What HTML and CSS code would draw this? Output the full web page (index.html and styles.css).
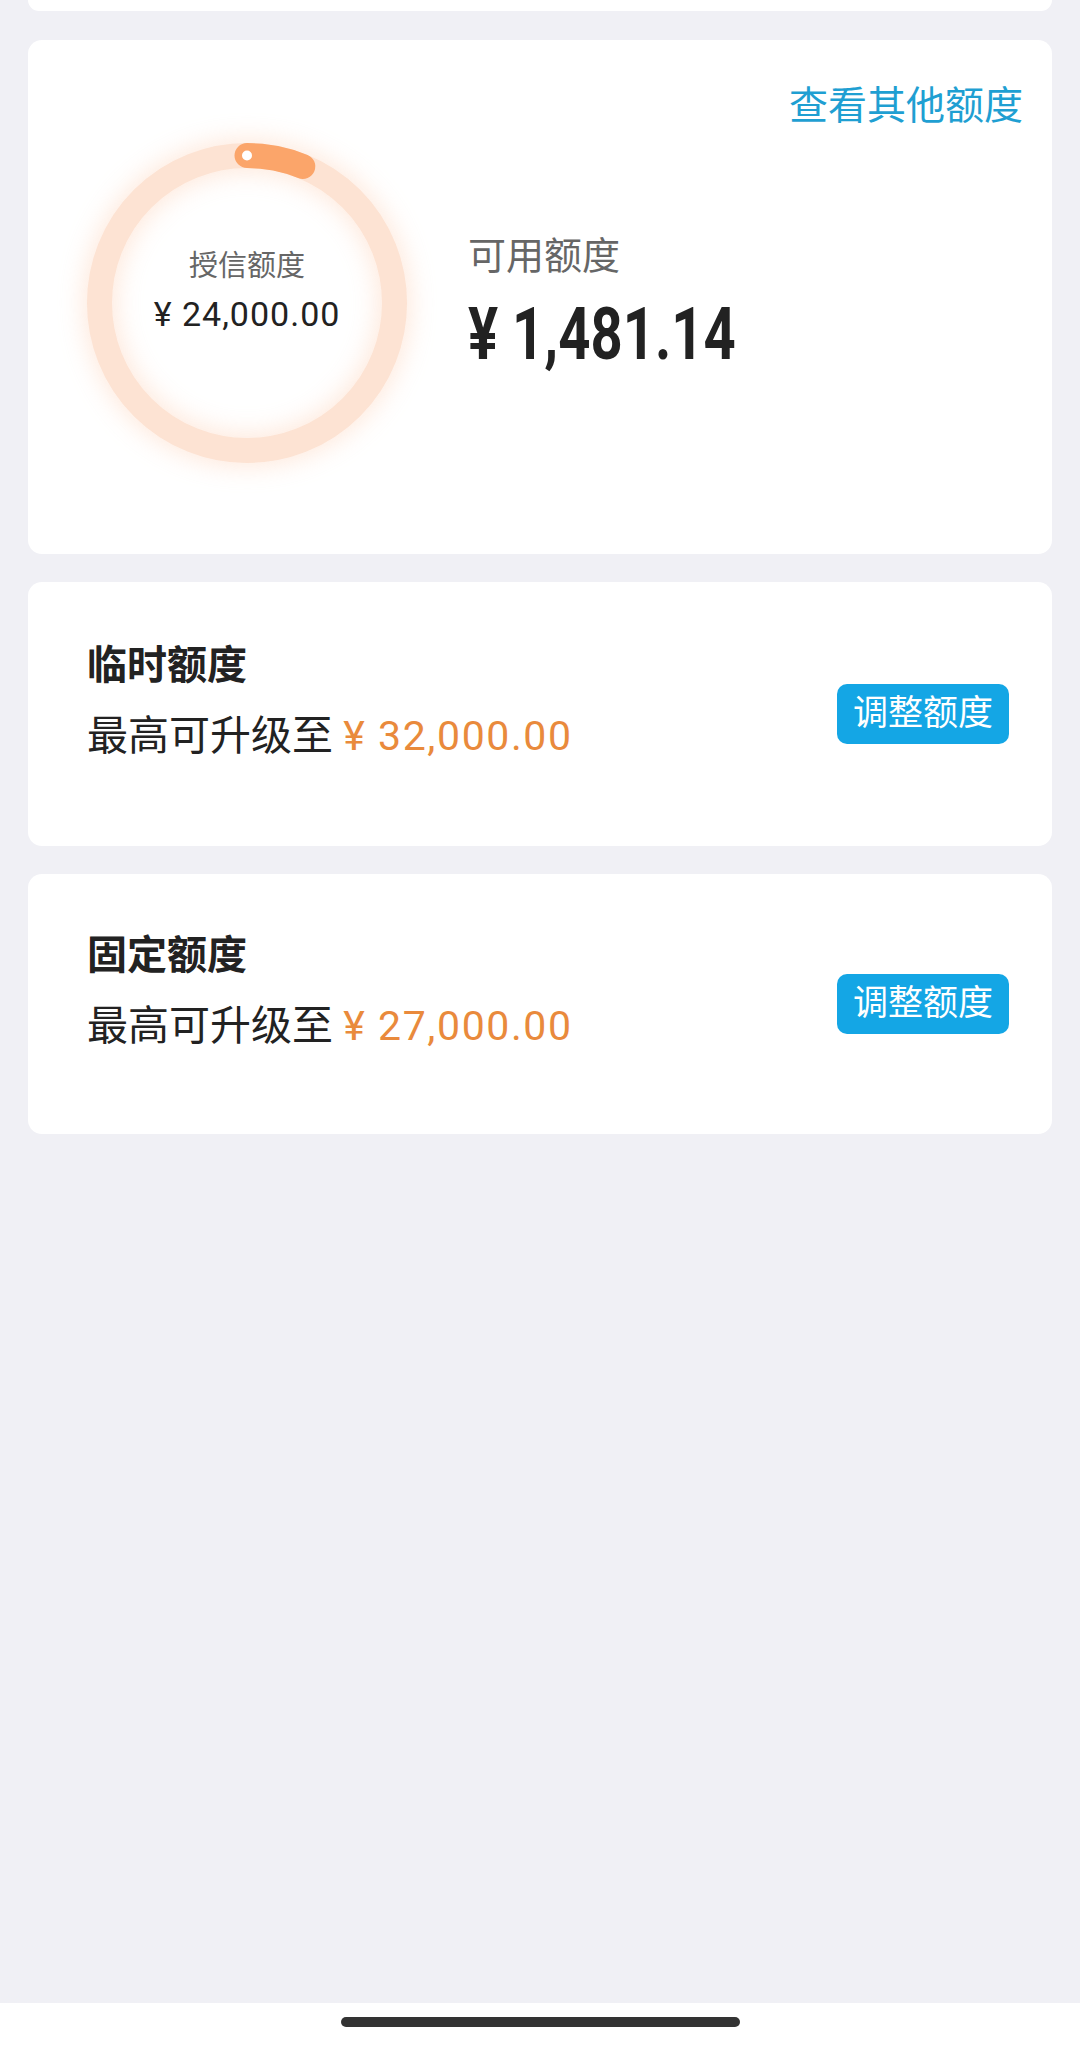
FILE: index.html
```html
<!DOCTYPE html>
<html lang="zh-CN">
<head>
    <meta charset="UTF-8">
    <meta name="viewport" content="width=device-width, initial-scale=1.0">
    <title>额度管理</title>
    <link rel="stylesheet" href="styles.css">
</head>
<body>
    <div class="page">
        <div class="card card-stub"></div>

        <div class="card quota-card">
            <div class="quota-head">
                <a class="other-link" href="#">查看其他额度</a>
            </div>
            <div class="quota-body">
                <div class="ring">
                    <svg class="ring-svg" width="320" height="320" viewBox="0 0 320 320">
                        <circle class="ring-track" cx="160" cy="160" r="147.5"></circle>
                        <circle class="ring-bar" cx="160" cy="160" r="147.5" stroke-dasharray="57.2 1000" transform="rotate(-90 160 160)"></circle>
                        <circle class="ring-dot" cx="160" cy="12.5" r="5"></circle>
                    </svg>
                    <div class="ring-text">
                        <div class="ring-label">授信额度</div>
                        <div class="ring-amount">¥ 24,000.00</div>
                    </div>
                </div>
                <div class="available">
                    <div class="available-label">可用额度</div>
                    <div class="available-amount"><span class="available-num">¥ 1,481.14</span></div>
                </div>
            </div>
        </div>

        <div class="card limit-card">
            <div class="limit-info">
                <div class="limit-title">临时额度</div>
                <div class="limit-desc">最高可升级至 <span class="limit-amount">¥ 32,000.00</span></div>
            </div>
            <button class="adjust-btn">调整额度</button>
        </div>

        <div class="card limit-card limit-card-short">
            <div class="limit-info">
                <div class="limit-title">固定额度</div>
                <div class="limit-desc">最高可升级至 <span class="limit-amount">¥ 27,000.00</span></div>
            </div>
            <button class="adjust-btn">调整额度</button>
        </div>
    </div>

    <div class="home-bar">
        <div class="home-indicator"></div>
    </div>
</body>
</html>
```

FILE: styles.css
```css
* {
    margin: 0;
    padding: 0;
    box-sizing: border-box;
}

body {
    font-family: 'Roboto', 'Noto Sans CJK SC', sans-serif;
    background: #f0f0f5;
    color: #222;
    min-height: 100vh;
    display: flex;
    flex-direction: column;
}

.page {
    flex: 1;
    display: flex;
    flex-direction: column;
    gap: 28px;
    padding: 0 28px;
}

.card {
    background: #fff;
    border-radius: 14px;
}

.card-stub {
    height: 11px;
    margin-bottom: 1px;
    border-radius: 0 0 11px 11px;
}

/* credit summary */
.quota-card {
    height: 514px;
    padding: 42px 29px 0 59px;
}

.quota-head {
    display: flex;
    justify-content: flex-end;
}

.other-link {
    font-size: 39px;
    line-height: 48px;
    color: #1f9fd2;
    text-decoration: none;
}

.quota-body {
    display: flex;
    align-items: flex-start;
    gap: 61px;
    margin-top: 13px;
}

.ring {
    position: relative;
    width: 320px;
    height: 320px;
    flex-shrink: 0;
}

.ring-svg {
    display: block;
    overflow: visible;
    filter: drop-shadow(0 0 14px rgba(252, 186, 145, 0.42));
}

.ring-track {
    fill: none;
    stroke: #fde3d3;
    stroke-width: 25;
}

.ring-bar {
    fill: none;
    stroke: #fba56a;
    stroke-width: 25;
    stroke-linecap: round;
}

.ring-dot {
    fill: #fff;
}

.ring-text {
    position: absolute;
    inset: 0;
    display: flex;
    flex-direction: column;
    align-items: center;
    justify-content: center;
    padding-bottom: 24px;
}

.ring-label {
    font-size: 29px;
    line-height: 40px;
    color: #666;
}

.ring-amount {
    font-size: 34px;
    line-height: 44px;
    letter-spacing: 1px;
    color: #222;
    margin-top: 6px;
}

.available {
    margin-top: 87px;
}

.available-label {
    font-size: 38px;
    line-height: 52px;
    color: #666;
}

.available-amount {
    font-size: 73px;
    font-weight: bold;
    line-height: 80px;
    color: #222;
    margin-top: 12px;
}

/* the app's numeric face is narrow; squeeze Roboto to match */
.available-num {
    display: inline-block;
    transform: scaleX(0.77);
    transform-origin: left center;
    white-space: nowrap;
}

/* adjustable limits */
.limit-card {
    height: 264px;
    display: flex;
    align-items: center;
    justify-content: space-between;
    padding: 0 43px 0 59px;
}

.limit-card-short {
    height: 260px;
}

.limit-info {
    margin-bottom: 26px;
}

.limit-title {
    font-size: 40px;
    font-weight: bold;
    line-height: 56px;
    color: #222;
}

.limit-desc {
    font-size: 41px;
    line-height: 56px;
    margin-top: 14px;
    color: #222;
}

.limit-amount {
    font-size: 41px;
    letter-spacing: 1.6px;
    color: #e98a3c;
}

.adjust-btn {
    font-family: 'Roboto', 'Noto Sans CJK SC', sans-serif;
    font-size: 35px;
    line-height: 60px;
    height: 60px;
    padding: 0 16px;
    border: none;
    border-radius: 10px;
    background: #14a6e5;
    color: #fff;
}

/* system gesture bar */
.home-bar {
    height: 44px;
    background: #fff;
    display: flex;
    justify-content: center;
    padding-top: 14px;
}

.home-indicator {
    width: 399px;
    height: 10px;
    border-radius: 5px;
    background: #333;
}
```
